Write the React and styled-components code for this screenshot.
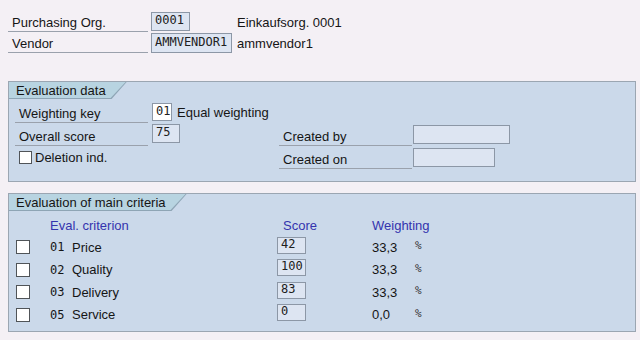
import React from "react";
import styled, { createGlobalStyle } from "styled-components";

const GlobalStyle = createGlobalStyle`
  html, body {
    margin: 0;
    padding: 0;
    background: #f4f0f5;
  }
  body {
    font-family: "Liberation Sans", Arial, sans-serif;
    font-size: 13px;
    color: #151515;
  }
`;

const criteria = [
  { code: "01", name: "Price", score: "42", weight: "33,3" },
  { code: "02", name: "Quality", score: "100", weight: "33,3" },
  { code: "03", name: "Delivery", score: "83", weight: "33,3" },
  { code: "05", name: "Service", score: "0", weight: "0,0" },
];

const App = () => {
  return (
    <>
      <GlobalStyle />
      <S.Page>
        <S.Header>
          <S.Label $w={140}>Purchasing Org.</S.Label>
          <S.Input $w={39} $h={19}>0001</S.Input>
          <S.Desc>Einkaufsorg. 0001</S.Desc>
          <S.Label $w={140}>Vendor</S.Label>
          <S.Input $w={81} $h={20}>AMMVENDOR1</S.Input>
          <S.Desc>ammvendor1</S.Desc>
        </S.Header>

        <S.Panel $top={28}>
          <S.Tab>
            <S.TabFill>Evaluation data</S.TabFill>
          </S.Tab>
          <S.DataGrid>
            <S.Cell>
              <S.Label $w={133}>Weighting key</S.Label>
              <S.Input $w={20} $mb={2} $ml={4} $white>01</S.Input>
              <S.Text $ml={5} $mb={3}>Equal weighting</S.Text>
            </S.Cell>
            <S.Cell />
            <S.Cell>
              <S.Label $w={133}>Overall score</S.Label>
              <S.Input $w={28} $h={19} $mb={3} $ml={4}>75</S.Input>
            </S.Cell>
            <S.Cell>
              <S.Label $w={133}>Created by</S.Label>
              <S.Input $w={97} $h={19} $mb={2} $ml={1} />
            </S.Cell>
            <S.Cell $center>
              <S.Check $size={13} $ml={4} />
              <S.Text $ml={3}>Deletion ind.</S.Text>
            </S.Cell>
            <S.Cell>
              <S.Label $w={133}>Created on</S.Label>
              <S.Input $w={82} $h={19} $mb={2} $ml={1} />
            </S.Cell>
          </S.DataGrid>
        </S.Panel>

        <S.Panel $top={11}>
          <S.Tab>
            <S.TabFill>Evaluation of main criteria</S.TabFill>
          </S.Tab>
          <S.Table>
            <S.Row $h={22}>
              <span />
              <S.ColHead style={{ gridColumn: "2 / span 2" }}>Eval. criterion</S.ColHead>
              <S.ColHead $pl={6}>Score</S.ColHead>
              <S.ColHead>Weighting</S.ColHead>
            </S.Row>
            {criteria.map((c) => (
              <S.Row key={c.code} $h={22.5}>
                <S.Check $size={14} />
                <S.Code>{c.code}</S.Code>
                <span>{c.name}</span>
                <S.ScoreBox>
                  <S.Input $w={29} $h={17}>{c.score}</S.Input>
                </S.ScoreBox>
                <span>{c.weight}</span>
                <S.Percent>%</S.Percent>
              </S.Row>
            ))}
          </S.Table>
        </S.Panel>
      </S.Page>
    </>
  );
};

export default App;

const S = {
  Page: styled.div`
    width: 640px;
    height: 340px;
    padding-top: 12px;
    box-sizing: border-box;
    overflow: hidden;
  `,

  Header: styled.div`
    display: grid;
    grid-template-columns: 143px 85px auto;
    grid-auto-rows: 20px;
    row-gap: 1px;
    align-items: start;
    margin-left: 8px;
  `,

  Label: styled.div`
    width: ${({ $w }) => $w}px;
    height: 20px;
    line-height: 21px;
    padding-left: 4px;
    box-sizing: border-box;
    border-bottom: 1px solid #9aa1ac;
    white-space: nowrap;
  `,

  Input: styled.div`
    width: ${({ $w }) => $w}px;
    height: ${({ $h }) => $h || 18}px;
    margin-left: ${({ $ml }) => $ml || 0}px;
    margin-bottom: ${({ $mb }) => $mb || 0}px;
    box-sizing: border-box;
    border: 1px solid #8c97a6;
    background: ${({ $white }) => ($white ? "#ffffff" : "#dde5f2")};
    font-family: "DejaVu Sans Mono", "Liberation Mono", monospace;
    font-size: 12px;
    line-height: ${({ $h }) => ($h || 18) - 4}px;
    padding-left: 3px;
    color: #202020;
    white-space: nowrap;
    overflow: hidden;
  `,

  Desc: styled.div`
    line-height: 21px;
    padding-left: 1px;
  `,

  Panel: styled.section`
    margin: ${({ $top }) => $top}px 4px 0 8px;
    border: 1px solid #9ba6b2;
    background: #cbd9ea;
  `,

  Tab: styled.div`
    display: inline-block;
    height: 17px;
    background: #8ea5b5;
    clip-path: polygon(0 0, 100% 0, calc(100% - 15px) 100%, 0 100%);
  `,

  TabFill: styled.div`
    height: 16px;
    line-height: 17px;
    margin-right: 1px;
    padding: 0 20px 0 7px;
    background: #b8d4e1;
    clip-path: polygon(0 0, 100% 0, calc(100% - 15px) 100%, 0 100%);
    white-space: nowrap;
  `,

  DataGrid: styled.div`
    display: grid;
    grid-template-columns: 264px 1fr;
    grid-auto-rows: 23px;
    padding: 1px 0 12px 6px;
  `,

  Cell: styled.div`
    display: flex;
    align-items: ${({ $center }) => ($center ? "center" : "flex-end")};
  `,

  Text: styled.span`
    margin-left: ${({ $ml }) => $ml || 0}px;
    margin-bottom: ${({ $mb }) => $mb || 0}px;
    white-space: nowrap;
  `,

  Check: styled.span`
    display: inline-block;
    width: ${({ $size }) => $size}px;
    height: ${({ $size }) => $size}px;
    margin-left: ${({ $ml }) => $ml || 0}px;
    box-sizing: border-box;
    border: 1px solid #505458;
    background: #ffffff;
  `,

  Table: styled.div`
    padding: 3px 0 5px 7px;
  `,

  Row: styled.div`
    display: grid;
    grid-template-columns: 34px 22px 205px 95px 43px auto;
    height: ${({ $h }) => $h}px;
    align-items: center;
  `,

  ColHead: styled.span`
    color: #3434ae;
    padding-left: ${({ $pl }) => $pl || 0}px;
    white-space: nowrap;
  `,

  Code: styled.span`
    font-family: "DejaVu Sans Mono", "Liberation Mono", monospace;
    font-size: 12px;
  `,

  ScoreBox: styled.span`
    display: flex;
    margin-bottom: 4px;
  `,

  Percent: styled.span`
    font-family: "DejaVu Sans Mono", "Liberation Mono", monospace;
    font-size: 11px;
    color: #333;
    margin-bottom: 3px;
  `,
};
